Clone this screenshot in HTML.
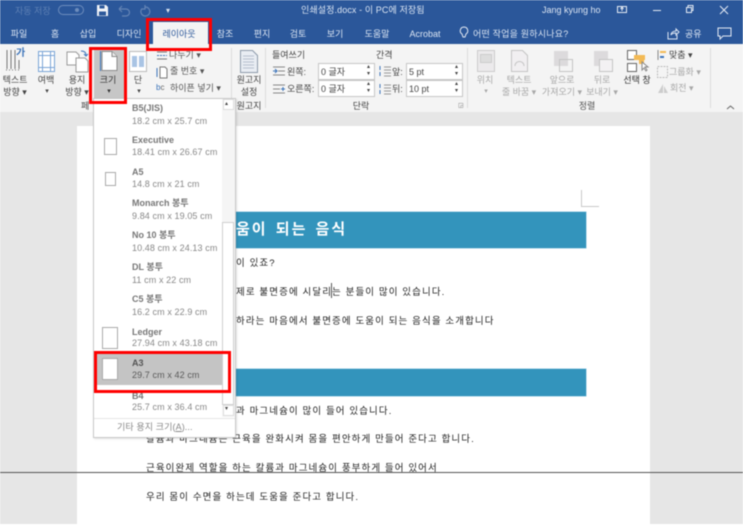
<!DOCTYPE html>
<html lang="ko"><head><meta charset="utf-8"><style>
html,body{margin:0;padding:0;width:743px;height:528px;overflow:hidden;background:#fff}
#r{position:relative;width:743px;height:528px;overflow:hidden;font-family:"Liberation Sans","Noto Sans CJK KR",sans-serif;font-size:9px;color:#444;filter:blur(.45px)}
#r div,#r span,#r svg{position:absolute}
.t{white-space:nowrap;line-height:12px}
.c{transform:translateX(-50%);text-align:center}
.w{color:#dbe5f3;font-size:9px}
.g{color:#a8a8a8}
.n{font-size:9px;color:#888;white-space:nowrap;line-height:12px;letter-spacing:.1px}
.b{font-size:9px;font-weight:bold;color:#777;white-space:nowrap;line-height:12px}
.d{font-size:9.5px;color:#222;white-space:nowrap;line-height:13px;letter-spacing:1.1px}
.rb{background:#fff;border:1px solid #c6c6c6;box-sizing:border-box}
.red{border:3px solid #f00;box-sizing:border-box}
.pg{background:#fff;border:1px solid #aaa;box-sizing:border-box}
.band{background:#3394bc;box-shadow:0 0 0 .5px #8cc6de}
</style></head><body><div id="r">
<div style="left:0;top:0;width:743px;height:44px;background:#2b579a"></div>
<div style="left:0;top:44px;width:743px;height:68px;background:#f4f4f4"></div>
<div style="left:0;top:112px;width:743px;height:416px;background:#e6e6e6"></div>

<!-- title bar -->
<span class="t" style="left:15px;top:5px;color:#5e80b4">자동 저장</span>
<div style="left:58px;top:5px;width:26px;height:10px;border:1px solid #6d8dbd;border-radius:6px;box-sizing:border-box"></div>
<div style="left:75px;top:8px;width:4px;height:4px;border-radius:50%;background:#6d8dbd"></div>
<svg style="left:96px;top:4px" width="13" height="13" viewBox="0 0 13 13"><path d="M1 1h9l2 2v9H1z" fill="#f0f3f8"/><rect x="3.5" y="1.5" width="5" height="3" fill="#2b579a"/><rect x="3" y="7.5" width="7" height="4" fill="#2b579a"/></svg>
<svg style="left:117px;top:4px" width="42" height="13" viewBox="0 0 42 13" fill="none" stroke="#6484b5" stroke-width="1.2"><path d="M2 5h7a3 3 0 0 1 0 7H5M2 5l3-3M2 5l3 3"/><path d="M28 3a4.500 4.500 0 1 1-3 1.500M28 1v4h-3"/></svg>
<span class="t" style="left:166px;top:5px;color:#d8e2f0;font-size:8px">▾</span>
<span class="t w" style="left:301px;top:4px;font-size:9px;letter-spacing:.1px">인쇄설정.docx - 이 PC에 저장됨</span>
<span class="t w" style="left:542px;top:4px;font-size:9px">Jang kyung ho</span>
<svg style="left:617px;top:4px" width="115" height="12" viewBox="0 0 115 12" fill="none" stroke="#e5ebf4"><rect x=".5" y="2.500" width="9" height="6"/><path d="M5 3v4M3.500 5 5 3l1.500 2"/><path d="M36 6.500h8"/><rect x="69.500" y="3.500" width="5" height="5"/><path d="M71 3V1.500h5v5h-1.500"/><path d="M111 2l-8 8M103 2l8 8"/></svg>

<!-- tabs -->
<div style="left:153px;top:22px;width:55px;height:23px;background:#f4f4f4"></div>
<span class="t w c" style="left:19px;top:28px">파일</span>
<span class="t w c" style="left:55px;top:28px">홈</span>
<span class="t w c" style="left:88px;top:28px">삽입</span>
<span class="t w c" style="left:129px;top:28px">디자인</span>
<span class="t c" style="left:179px;top:28px;color:#2b579a">레이아웃</span>
<span class="t w c" style="left:225px;top:28px">참조</span>
<span class="t w c" style="left:262px;top:28px">편지</span>
<span class="t w c" style="left:298px;top:28px">검토</span>
<span class="t w c" style="left:335px;top:28px">보기</span>
<span class="t w c" style="left:377px;top:28px">도움말</span>
<span class="t w c" style="left:425px;top:28px">Acrobat</span>
<svg style="left:459px;top:26px" width="10" height="14" viewBox="0 0 10 14" fill="none" stroke="#e5ebf4"><path d="M5 1a3.800 3.800 0 0 0-2 7l1 3h2l1-3a3.800 3.800 0 0 0-2-7z"/></svg>
<span class="t w" style="left:473px;top:28px;letter-spacing:.2px">어떤 작업을 원하시나요?</span>
<svg style="left:667px;top:27px" width="13" height="13" viewBox="0 0 13 13" fill="none" stroke="#dbe5f3"><path d="M1 5v7h9V8M4 8c0-3 3-4 5-4V2l3 3-3 3V6c-2 0-4 0-5 2z"/></svg>
<span class="t w" style="left:685px;top:28px">공유</span>
<svg style="left:717px;top:27px" width="15" height="13" viewBox="0 0 15 13" fill="none" stroke="#e5ebf4"><path d="M1 1h13v8H6l-3 3V9H1z"/></svg>

<!-- ribbon separators -->
<div style="left:231px;top:48px;width:1px;height:60px;background:#dcdcdc"></div>
<div style="left:265px;top:48px;width:1px;height:60px;background:#dcdcdc"></div>
<div style="left:467px;top:48px;width:1px;height:60px;background:#dcdcdc"></div>
<div style="left:710px;top:48px;width:1px;height:60px;background:#dcdcdc"></div>

<!-- page setup group -->
<span class="t" style="left:81px;top:100px">페</span>
<svg style="left:5px;top:49px" width="24" height="24" viewBox="0 0 24 24" fill="none" stroke="#777"><path d="M2 1v19M6 1v19M10 1v19M14 11v9"/><path d="M1 21h15" stroke-dasharray="1 2"/></svg>
<span class="t" style="left:16px;top:48px;font-size:10px;font-weight:bold;color:#3b73b9">가</span>
<span class="t c" style="left:15px;top:74px">텍스트</span>
<span class="t c" style="left:15px;top:86px">방향 ▾</span>
<svg style="left:38px;top:51px" width="17" height="21" viewBox="0 0 17 21" fill="#fff" stroke="#7aa5d6"><rect x=".5" y=".5" width="16" height="20"/><path d="M4.500 0v21M12.500 0v21M0 4.500h17M0 16.500h17"/></svg>
<span class="t c" style="left:46px;top:74px">여백</span>
<span class="t c" style="left:47px;top:86px;font-size:7px">▾</span>
<svg style="left:66px;top:49px" width="24" height="24" viewBox="0 0 24 24" fill="#fff" stroke="#999"><path d="M1 3h9l3 3v10H1z"/><path d="M10 9h9l3 3v11H10z"/><path d="M15 2c3 0 5 1 5 4M18 5l2 2 2-2" fill="none" stroke="#3b73b9"/></svg>
<span class="t c" style="left:77px;top:74px">용지</span>
<span class="t c" style="left:77px;top:86px">방향 ▾</span>

<!-- size button -->
<div style="left:94px;top:47px;width:31px;height:55px;background:#c6c6c6"></div>
<svg style="left:100px;top:51px" width="18" height="20" viewBox="0 0 18 20" fill="#fff" stroke="#8a8a8a"><path d="M2 .5h10l5 5v14H2z"/><path d="M12 .5v5h5" fill="#eee"/><path d="M.5 0v20" stroke="#3b73b9"/></svg>
<span class="t c" style="left:108px;top:74px;color:#333">크기</span>
<span class="t c" style="left:109px;top:86px;font-size:7px;color:#333">▾</span>

<svg style="left:129px;top:51px" width="18" height="21" viewBox="0 0 18 21" fill="#fff" stroke="#bbb"><rect x=".5" y=".5" width="17" height="20"/><path d="M3 5h5v11H3zM10 5h5v11h-5z" fill="#a9c4e4" stroke="none"/></svg>
<span class="t c" style="left:138px;top:74px">단</span>
<span class="t c" style="left:139px;top:86px;font-size:7px">▾</span>

<svg style="left:156px;top:50px" width="12" height="12" viewBox="0 0 12 12" fill="none" stroke="#777"><path d="M1 2h10M1 9h10"/><path d="M1 5.500h10" stroke="#3b73b9" stroke-dasharray="2 1"/></svg>
<span class="t" style="left:169px;top:49px;color:#555">나누기 ▾</span>
<svg style="left:156px;top:66px" width="12" height="13" viewBox="0 0 12 13" fill="#fff" stroke="#777"><path d="M4 1h5l2 2v9H4z"/><path d="M1 2v9" stroke="#3b73b9"/></svg>
<span class="t" style="left:170px;top:65px;color:#555">줄 번호 ▾</span>
<span class="t" style="left:156px;top:82px;color:#3b73b9;font-size:8px">b<span style="position:static;color:#666">c</span></span>
<span class="t" style="left:170px;top:82px;color:#555">하이픈 넣기 ▾</span>

<!-- manuscript -->
<svg style="left:240px;top:50px" width="18" height="23" viewBox="0 0 18 23" fill="#e9edf3" stroke="#8d9bab"><path d="M.5.500h12l5 5v17H.5z"/><path d="M3 6h11M3 9h11M3 12h11M3 15h11M3 18h11" stroke="#b6c1ce"/></svg>
<span class="t c" style="left:249px;top:74px">원고지</span>
<span class="t c" style="left:249px;top:86px">설정</span>
<span class="t c" style="left:249px;top:100px">원고지</span>

<!-- paragraph -->
<span class="t" style="left:272px;top:49px">들여쓰기</span>
<span class="t" style="left:376px;top:49px">간격</span>
<svg style="left:272px;top:66px" width="14" height="10" viewBox="0 0 14 10" fill="none" stroke="#888"><path d="M1 1h12M6 5h7M1 9h12"/><path d="M1 5h4M3 3l2 2-2 2" stroke="#3b73b9"/></svg>
<span class="t" style="left:287px;top:66px">왼쪽:</span>
<div class="rb" style="left:318px;top:63px;width:57px;height:17px"></div>
<span class="t" style="left:321px;top:66px">0 글자</span>
<span class="t" style="left:367px;top:64px;font-size:6px;line-height:7px">▴<br>▾</span>
<svg style="left:272px;top:84px" width="14" height="10" viewBox="0 0 14 10" fill="none" stroke="#888"><path d="M1 1h12M1 5h7M1 9h12"/><path d="M9 5h4M11 3v4" stroke="#3b73b9"/></svg>
<span class="t" style="left:287px;top:83px">오른쪽:</span>
<div class="rb" style="left:318px;top:80px;width:57px;height:17px"></div>
<span class="t" style="left:321px;top:83px">0 글자</span>
<span class="t" style="left:367px;top:81px;font-size:6px;line-height:7px">▴<br>▾</span>
<svg style="left:378px;top:65px" width="13" height="12" viewBox="0 0 13 12" fill="none" stroke="#999"><path d="M6 2h7M6 5h7M6 8h7M6 11h7"/><path d="M2 1v4M2 7v4" stroke="#3b73b9"/></svg>
<span class="t" style="left:392px;top:66px">앞:</span>
<div class="rb" style="left:406px;top:63px;width:57px;height:17px"></div>
<span class="t" style="left:409px;top:66px">5 pt</span>
<span class="t" style="left:455px;top:64px;font-size:6px;line-height:7px">▴<br>▾</span>
<svg style="left:378px;top:83px" width="13" height="12" viewBox="0 0 13 12" fill="none" stroke="#999"><path d="M6 2h7M6 5h7M6 8h7M6 11h7"/><path d="M2 1v4M2 7v4" stroke="#3b73b9"/></svg>
<span class="t" style="left:392px;top:83px">뒤:</span>
<div class="rb" style="left:406px;top:80px;width:57px;height:17px"></div>
<span class="t" style="left:409px;top:83px">10 pt</span>
<span class="t" style="left:455px;top:81px;font-size:6px;line-height:7px">▴<br>▾</span>
<span class="t c" style="left:361px;top:100px">단락</span>
<span class="t" style="left:458px;top:100px;font-size:6px;color:#777">◲</span>

<!-- arrange -->
<svg style="left:477px;top:50px" width="18" height="22" viewBox="0 0 18 22" fill="#eceaec" stroke="#ccc"><rect x=".5" y=".5" width="17" height="21"/><rect x="3.500" y="4.500" width="11" height="8" fill="#ddd"/></svg>
<span class="t c g" style="left:485px;top:74px">위치</span>
<span class="t c g" style="left:486px;top:86px;font-size:7px">▾</span>
<svg style="left:511px;top:50px" width="17" height="22" viewBox="0 0 17 22" fill="#f1eff1" stroke="#c4c4c4"><path d="M.5.500h11l5 5v16H.5z"/><path d="M4 16c0-6 9-6 9 0" fill="none"/></svg>
<span class="t c g" style="left:519px;top:74px">텍스트</span>
<span class="t c g" style="left:519px;top:86px">줄 바꿈 ▾</span>
<svg style="left:553px;top:50px" width="20" height="22" viewBox="0 0 20 22"><rect x="1" y="1" width="14" height="15" fill="#dcdadc"/><rect x="6.500" y="9.500" width="13" height="12" fill="none" stroke="#c4c4c4"/></svg>
<span class="t c g" style="left:562px;top:74px">앞으로</span>
<span class="t c g" style="left:562px;top:86px">가져오기 ▾</span>
<svg style="left:593px;top:50px" width="20" height="22" viewBox="0 0 20 22"><rect x="1" y="1" width="14" height="15" fill="#dcdadc"/><rect x="6.500" y="9.500" width="13" height="12" fill="#f3f1f3" stroke="#c4c4c4"/></svg>
<span class="t c g" style="left:602px;top:74px">뒤로</span>
<span class="t c g" style="left:602px;top:86px">보내기 ▾</span>
<svg style="left:626px;top:49px" width="24" height="24" viewBox="0 0 24 24" fill="#fff" stroke="#666"><rect x="1.500" y="1.500" width="9" height="9"/><rect x="1.500" y="14.500" width="9" height="8"/><rect x="8" y="6" width="11" height="5" fill="#f3ba55" stroke="none"/><rect x="13" y="9" width="5" height="6" fill="#f3ba55" stroke="none"/><path d="M16 13v8l2-2 2 3 1-1-2-3h3z" stroke="#888"/></svg>
<span class="t c" style="left:637px;top:74px;color:#333">선택 창</span>
<svg style="left:657px;top:49px" width="12" height="12" viewBox="0 0 12 12" fill="none"><path d="M1 1v10" stroke="#888"/><path d="M3 2h6v2H3z" fill="#f3ba55"/><path d="M3 7h4v2H3z" fill="#3b73b9"/></svg>
<span class="t" style="left:669px;top:49px">맞춤 ▾</span>
<svg style="left:657px;top:66px" width="11" height="12" viewBox="0 0 11 12" fill="none" stroke="#bbb" stroke-dasharray="2 1"><rect x=".5" y=".5" width="10" height="11"/></svg>
<span class="t g" style="left:669px;top:66px">그룹화 ▾</span>
<svg style="left:657px;top:83px" width="12" height="11" viewBox="0 0 12 11" fill="#ccc"><path d="M6 1 1 10h5zM7 3l4 7H7z"/></svg>
<span class="t g" style="left:670px;top:82px">회전 ▾</span>
<span class="t c" style="left:587px;top:100px;color:#555">정렬</span>
<svg style="left:726px;top:104px" width="9" height="6" viewBox="0 0 9 6" fill="none" stroke="#666"><path d="M1 5l3.500-3L8 5"/></svg>

<!-- page -->
<div style="left:77px;top:126px;width:573px;height:398px;background:#fff"></div>
<div style="left:0;top:524px;width:743px;height:4px;background:#fff"></div>
<svg style="left:581px;top:190px" width="20" height="18" viewBox="0 0 20 18" fill="none" stroke="#c9c9c9"><path d="M.5 0v16.500H18"/></svg>
<div class="band" style="left:235px;top:212px;width:351px;height:36px"></div>
<span class="t" style="left:236px;top:221px;font-size:15px;line-height:18px;font-weight:bold;color:#fff;letter-spacing:2px;word-spacing:2px">움이 되는 음식</span>
<span class="d" style="left:236px;top:257px">이 있죠?</span>
<span class="d" style="left:236px;top:286px">제로 불면증에 시달리는 분들이 많이 있습니다.</span>
<div style="left:331px;top:283px;width:1px;height:15px;background:#555"></div>
<span class="d" style="left:236px;top:315px">하라는 마음에서 불면증에 도움이 되는 음식을 소개합니다</span>
<div class="band" style="left:235px;top:369px;width:351px;height:27px"></div>
<span class="d" style="left:236px;top:405px">과 마그네슘이 많이 들어 있습니다.</span>
<span class="d" style="left:146px;top:433px">칼슘과 마그네슘은 근육을 완화시켜 몸을 편안하게 만들어 준다고 합니다.</span>
<span class="d" style="left:146px;top:462px">근육이완제 역할을 하는 칼륨과 마그네슘이 풍부하게 들어 있어서</span>
<span class="d" style="left:146px;top:491px">우리 몸이 수면을 하는데 도움을 준다고 합니다.</span>
<div style="left:0;top:472px;width:743px;height:1px;background:#555"></div>

<!-- dropdown -->
<div style="left:93px;top:98px;width:143px;height:340px;background:#fff;border:1px solid #c8c8c8;box-sizing:border-box;box-shadow:1px 1px 2px rgba(0,0,0,.12)"></div>
<div style="left:222px;top:99px;width:13px;height:318px;background:#f5f5f5"></div>
<div class="pg" style="left:223px;top:99px;width:11px;height:11px;border-color:#ddd"></div>
<span class="t" style="left:225px;top:98px;font-size:6px;color:#444">▴</span>
<div style="left:222px;top:222px;width:12px;height:183px;background:#fff;border:1px solid #cfcfcf;box-sizing:border-box"></div>
<div class="pg" style="left:223px;top:405px;width:11px;height:11px;border-color:#ddd"></div>
<span class="t" style="left:225px;top:403px;font-size:6px;color:#444">▾</span>
<div style="left:94px;top:418px;width:141px;height:1px;background:#e5e5e5"></div>

<div style="left:94px;top:352px;width:128px;height:33px;background:#c4c4c4"></div>

<span class="b" style="left:132px;top:102px">B5(JIS)</span><span class="n" style="left:132px;top:115px">18.2 cm x 25.7 cm</span>
<div class="pg" style="left:104px;top:138px;width:13px;height:17px"></div>
<span class="b" style="left:132px;top:134px">Executive</span><span class="n" style="left:132px;top:146px">18.41 cm x 26.67 cm</span>
<div class="pg" style="left:105px;top:172px;width:11px;height:14px"></div>
<span class="b" style="left:132px;top:166px">A5</span><span class="n" style="left:132px;top:178px">14.8 cm x 21 cm</span>
<span class="b" style="left:132px;top:197px">Monarch 봉투</span><span class="n" style="left:132px;top:210px">9.84 cm x 19.05 cm</span>
<span class="b" style="left:132px;top:229px">No 10 봉투</span><span class="n" style="left:132px;top:242px">10.48 cm x 24.13 cm</span>
<span class="b" style="left:132px;top:261px">DL 봉투</span><span class="n" style="left:132px;top:274px">11 cm x 22 cm</span>
<span class="b" style="left:132px;top:293px">C5 봉투</span><span class="n" style="left:132px;top:306px">16.2 cm x 22.9 cm</span>
<div class="pg" style="left:102px;top:327px;width:16px;height:22px"></div>
<span class="b" style="left:132px;top:326px">Ledger</span><span class="n" style="left:132px;top:337px">27.94 cm x 43.18 cm</span>
<div class="pg" style="left:102px;top:358px;width:16px;height:22px"></div>
<span class="b" style="left:132px;top:357px;color:#555">A3</span><span class="n" style="left:132px;top:369px;color:#5a5a5a">29.7 cm x 42 cm</span>
<span class="b" style="left:132px;top:390px">B4</span><span class="n" style="left:132px;top:401px">25.7 cm x 36.4 cm</span>
<span class="n" style="left:117px;top:421px">기타 용지 크기(<u>A</u>)...</span>

<!-- red highlights -->
<div class="red" style="left:146px;top:18px;width:66px;height:33px"></div>
<div class="red" style="left:89px;top:47px;width:38px;height:57px"></div>
<div class="red" style="left:94px;top:351px;width:137px;height:42px"></div>
</div></body></html>
